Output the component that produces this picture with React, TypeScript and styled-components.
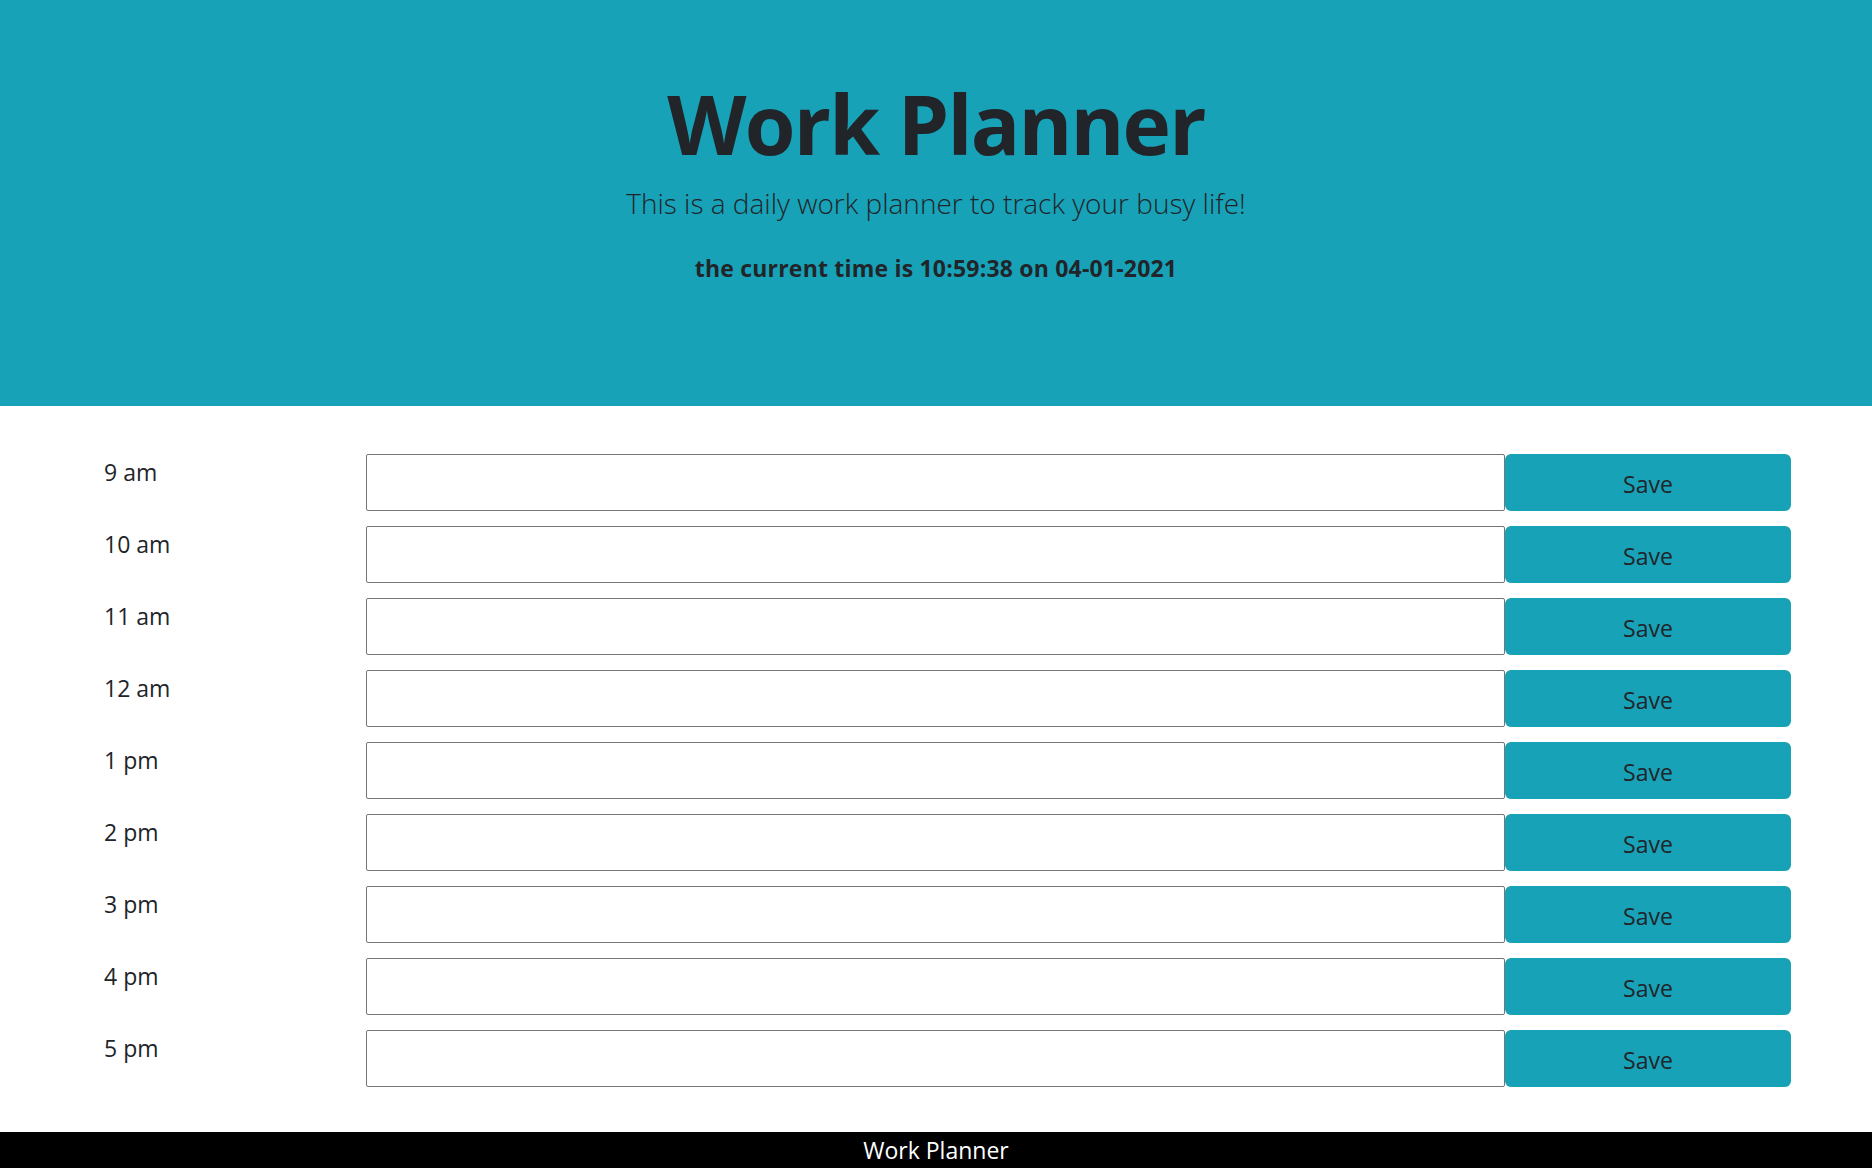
import React from "react";
import styled, { createGlobalStyle } from "styled-components";

const GlobalStyle = createGlobalStyle`
  * { box-sizing: border-box; }
  html, body { margin: 0; padding: 0; }
  body {
    font-family: "Open Sans", "Noto Sans", "Liberation Sans", sans-serif;
    font-size: 24px;
    line-height: 1.5;
    color: #212529;
    background: #fff;
  }
`;

const Header = styled.header`
  background: #17a2b8;
  height: 406px;
  padding-top: 74px;
  display: flex;
  flex-direction: column;
  align-items: center;
  margin-bottom: 48px;
`;

const Title = styled.h1`
  margin: 0;
  font-size: 82px;
  font-weight: 700;
  line-height: 1.2;
  color: #212529;
  letter-spacing: -1.8px;
`;

const Lead = styled.p`
  margin: 10px 0 0;
  font-size: 28px;
  font-weight: 300;
  line-height: 1.5;
  color: #212529;
`;

const Clock = styled.p`
  margin: 27px 0 0;
  font-size: 23px;
  font-weight: 700;
  line-height: 1.5;
  letter-spacing: 0.2px;
`;

const Planner = styled.main`
  display: flex;
  flex-direction: column;
  gap: 15px;
  padding: 0 81px 45px 104px;
`;

const Row = styled.div`
  display: flex;
  height: 57px;
`;

const HourLabel = styled.div`
  width: 262px;
  padding-top: 1px;
  font-size: 23px;
  line-height: 1.5;
  color: #212529;
`;

const Entry = styled.textarea`
  flex: 1;
  height: 57px;
  border: 1px solid #767676;
  border-radius: 2px;
  resize: none;
  font-family: inherit;
  font-size: 20px;
  padding: 6px;
  background: #fff;
`;

const SaveButton = styled.button`
  width: 286px;
  height: 57px;
  border: none;
  border-radius: 6px;
  background: #17a2b8;
  color: #212529;
  font-family: inherit;
  font-size: 23px;
  line-height: 1.5;
  padding: 3px 0 0;
  cursor: pointer;
`;

const Footer = styled.footer`
  background: #000;
  color: #fff;
  text-align: center;
  font-size: 23px;
  line-height: 36px;
  height: 36px;
`;

const hours = ["9 am", "10 am", "11 am", "12 am", "1 pm", "2 pm", "3 pm", "4 pm", "5 pm"];

export default function App() {
  return (
    <>
      <GlobalStyle />
      <Header>
        <Title>Work Planner</Title>
        <Lead>This is a daily work planner to track your busy life!</Lead>
        <Clock>the current time is 10:59:38 on 04-01-2021</Clock>
      </Header>
      <Planner>
        {hours.map((h) => (
          <Row key={h}>
            <HourLabel>{h}</HourLabel>
            <Entry />
            <SaveButton>Save</SaveButton>
          </Row>
        ))}
      </Planner>
      <Footer>Work Planner</Footer>
    </>
  );
}
